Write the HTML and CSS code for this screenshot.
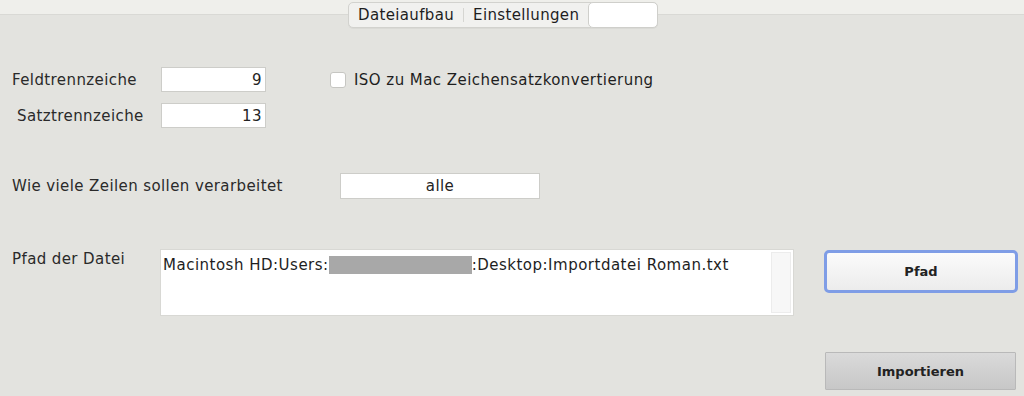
FILE: index.html
```html
<!DOCTYPE html>
<html lang="de">
<head>
<meta charset="utf-8">
<link rel="stylesheet" href="styles.css">
</head>
<body>
<div class="window">
  <header class="header">
    <div class="tabs">
      <span class="tab">Dateiaufbau</span>
      <span class="tab-sep"></span>
      <span class="tab">Einstellungen</span>
      <span class="tab tab-active"></span>
    </div>
  </header>

  <section class="seps">
    <div class="sep-rows">
      <div class="row row-feld">
        <span class="label label-feld">Feldtrennzeiche</span>
        <span class="field field-num">9</span>
      </div>
      <div class="row row-satz">
        <span class="label label-satz">Satztrennzeiche</span>
        <span class="field field-num">13</span>
      </div>
    </div>
    <label class="check">
      <span class="box"></span>
      <span class="check-text">ISO zu Mac Zeichensatzkonvertierung</span>
    </label>
  </section>

  <section class="row row-lines">
    <span class="label label-lines">Wie viele Zeilen sollen verarbeitet</span>
    <span class="field field-lines">alle</span>
  </section>

  <section class="row row-path">
    <span class="label label-path">Pfad der Datei</span>
    <div class="textarea">
      <div class="path-text">Macintosh HD:Users:<span class="redact"></span>:Desktop:Importdatei Roman.txt</div>
      <div class="scroll"></div>
    </div>
    <button class="btn btn-focus">Pfad</button>
  </section>

  <section class="row row-import">
    <button class="btn btn-gray">Importieren</button>
  </section>
</div>
</body>
</html>
```
FILE: styles.css
```css
* { box-sizing: border-box; }
html, body { margin: 0; padding: 0; }
body {
  width: 1024px;
  height: 396px;
  overflow: hidden;
  background: #e3e3df;
  font-family: "DejaVu Sans", "Liberation Sans", sans-serif;
  font-size: 15px;
  letter-spacing: 0.4px;
  color: #232323;
}
.window { width: 1024px; height: 396px; }

.header {
  height: 30px;
  padding-top: 2px;
  padding-left: 348px;
  background: linear-gradient(#efefeb 0, #efefeb 14px, #d9d9d5 14px, #d9d9d5 15px, #e3e3df 15px);
}
.tabs {
  display: inline-flex;
  align-items: stretch;
  height: 26px;
  background: #f1f1ef;
  border: 1px solid #d2d2ce;
  border-radius: 5px;
  box-shadow: 0 1px 0 rgba(0,0,0,0.04);
}
.tab {
  display: flex;
  align-items: center;
  padding: 0 9px 0 9px;
  font-size: 15px;
  letter-spacing: 0.35px;
  color: #1e1e1e;
}
.tab-sep {
  width: 1px;
  margin: 5px 0;
  background: #d6d6d2;
}
.tab-active {
  width: 70px;
  margin: -1px -1px -1px 0;
  background: #ffffff;
  border: 1px solid #cfcfcb;
  border-radius: 5px;
}

.seps {
  display: flex;
  align-items: flex-start;
  margin-top: 37px;
}
.sep-rows { display: flex; flex-direction: column; gap: 11px; }
.row { display: flex; align-items: center; }
.label { color: #2a2a2a; }
.label-feld { width: 161px; padding-left: 12px; }
.label-satz { width: 161px; padding-left: 17px; }
.field {
  background: #fff;
  border: 1px solid #cdcdc9;
  height: 25px;
  display: flex;
  align-items: center;
}
.field-num {
  width: 105px;
  justify-content: flex-end;
  padding-right: 3px;
  font-size: 15px;
}
.check {
  display: flex;
  align-items: center;
  margin-left: 64px;
  height: 25px;
}
.box {
  width: 16px;
  height: 16px;
  background: #fff;
  border: 1px solid #c6c6c2;
  border-radius: 3px;
  margin-right: 8px;
}
.check-text { font-size: 15px; letter-spacing: 0.45px; color: #1e1e1e; }

.row-lines { margin-top: 45px; }
.label-lines { width: 340px; padding-left: 12px; }
.field-lines {
  width: 200px;
  height: 26px;
  justify-content: center;
  font-size: 15px;
}

.row-path { margin-top: 50px; align-items: flex-start; }
.label-path { width: 160px; padding-left: 12px; padding-top: 1px; }
.textarea {
  width: 634px;
  height: 67px;
  background: #fff;
  border: 1px solid #d8d8d4;
  display: flex;
  padding: 2px 2px 2px 2px;
}
.path-text {
  flex: 1;
  font-size: 15px;
  letter-spacing: 0.5px;
  color: #1e1e1e;
  padding-top: 4px;
}
.redact {
  display: inline-block;
  width: 143px;
  height: 18px;
  background: #a8a8a8;
  vertical-align: -4px;
}
.scroll {
  width: 20px;
  background: #f7f7f7;
  border: 1px solid #ececec;
}
.btn {
  font-family: inherit;
  font-weight: bold;
  font-size: 13px;
  letter-spacing: 0;
  color: #222;
  cursor: default;
}
.btn-focus {
  margin-left: 30px;
  margin-top: 1px;
  width: 194px;
  height: 43px;
  border: 3px solid #7f9de6;
  border-radius: 5px;
  background: linear-gradient(#fbfbfb, #ececec);
}
.row-import { margin-top: 36px; padding-left: 825px; }
.btn-gray {
  width: 191px;
  height: 38px;
  border: 1px solid #b9b9b9;
  border-radius: 1px;
  background: linear-gradient(#dadada, #c7c7c7);
}
```
